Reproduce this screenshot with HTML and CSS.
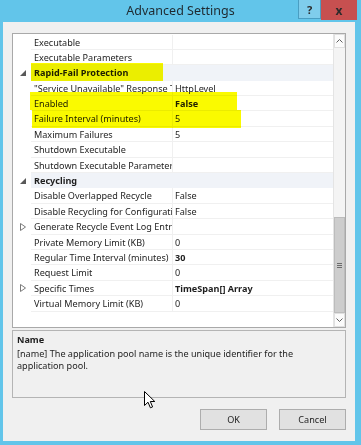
FILE: index.html
```html
<!DOCTYPE html>
<html lang="en">
<head>
  <meta charset="UTF-8">
  <title>Advanced Settings</title>
  <link rel="stylesheet" href="styles.css">
</head>
<body>
  <div class="window">
    <div class="titlebar">
      <span></span>
      <span class="title">Advanced Settings</span>
      <div class="caption-btns">
        <span class="cb help">?</span>
        <span class="cb close">x</span>
      </div>
    </div>

    <div class="client">
      <div class="grid">
        <div class="rows">
          <div class="row"><span class="gutter"></span><span class="name">Executable</span><span class="value"></span></div>
          <div class="row"><span class="gutter"></span><span class="name">Executable Parameters</span><span class="value"></span></div>
          <div class="row cat"><span class="gutter"><svg width="6" height="6" viewBox="0 0 6 6"><path d="M6 0V6H0z" fill="#595959"/></svg></span><span class="name">Rapid-Fail Protection</span></div>
          <div class="row"><span class="gutter"></span><span class="name">"Service Unavailable" Response Type</span><span class="value">HttpLevel</span></div>
          <div class="row"><span class="gutter"></span><span class="name">Enabled</span><span class="value bold">False</span></div>
          <div class="row"><span class="gutter"></span><span class="name">Failure Interval (minutes)</span><span class="value">5</span></div>
          <div class="row"><span class="gutter"></span><span class="name">Maximum Failures</span><span class="value">5</span></div>
          <div class="row"><span class="gutter"></span><span class="name">Shutdown Executable</span><span class="value"></span></div>
          <div class="row"><span class="gutter"></span><span class="name">Shutdown Executable Parameters</span><span class="value"></span></div>
          <div class="row cat"><span class="gutter"><svg width="6" height="6" viewBox="0 0 6 6"><path d="M6 0V6H0z" fill="#595959"/></svg></span><span class="name">Recycling</span></div>
          <div class="row"><span class="gutter"></span><span class="name">Disable Overlapped Recycle</span><span class="value">False</span></div>
          <div class="row"><span class="gutter"></span><span class="name">Disable Recycling for Configuration Changes</span><span class="value">False</span></div>
          <div class="row"><span class="gutter"><svg width="6" height="8" viewBox="0 0 6 8"><path d="M0.5 0.5L5.5 4L0.5 7.5z" fill="none" stroke="#7a7a7a"/></svg></span><span class="name">Generate Recycle Event Log Entry</span><span class="value"></span></div>
          <div class="row"><span class="gutter"></span><span class="name">Private Memory Limit (KB)</span><span class="value">0</span></div>
          <div class="row"><span class="gutter"></span><span class="name">Regular Time Interval (minutes)</span><span class="value bold">30</span></div>
          <div class="row"><span class="gutter"></span><span class="name">Request Limit</span><span class="value">0</span></div>
          <div class="row"><span class="gutter"><svg width="6" height="8" viewBox="0 0 6 8"><path d="M0.5 0.5L5.5 4L0.5 7.5z" fill="none" stroke="#7a7a7a"/></svg></span><span class="name">Specific Times</span><span class="value bold">TimeSpan[] Array</span></div>
          <div class="row"><span class="gutter"></span><span class="name">Virtual Memory Limit (KB)</span><span class="value">0</span></div>
        </div>
        <div class="scrollbar">
          <span class="sb-btn"><svg width="7" height="4" viewBox="0 0 7 4"><path d="M0.5 3.5L3.5 0.5L6.5 3.5" fill="none" stroke="#606060"/></svg></span>
          <div class="sb-track">
            <div class="sb-thumb"><span class="grip"></span></div>
          </div>
          <span class="sb-btn"><svg width="7" height="4" viewBox="0 0 7 4"><path d="M0.5 0.5L3.5 3.5L6.5 0.5" fill="none" stroke="#606060"/></svg></span>
        </div>
      </div>

      <div class="desc">
        <div class="desc-title">Name</div>
        <div class="desc-text">[name] The application pool name is the unique identifier for the application pool.</div>
      </div>

      <div class="buttons">
        <button class="btn">OK</button>
        <button class="btn">Cancel</button>
      </div>
    </div>

    <!-- marker highlights drawn over the grid -->
    <span class="hl hl-cat"></span>
    <span class="hl hl-enabled"></span>
    <span class="hl hl-interval"></span>

    <svg class="cursor" width="12" height="18" viewBox="0 0 12 18">
      <path d="M0.5 0.5V14.5L4 11.2L6.4 16.8L8.6 15.9L6.3 10.5H10.8z" fill="#fff" stroke="#000" stroke-linejoin="round"/>
    </svg>
  </div>
</body>
</html>
```

FILE: styles.css
```css
body {
  margin: 0;
  background: #62c5ea;
  font-family: "Noto Sans", "Open Sans", sans-serif;
  color: #1e1e1e;
}

.window {
  position: relative;
  width: 361px;
  height: 445px;
  overflow: hidden;
}

.titlebar {
  display: grid;
  grid-template-columns: 1fr auto 1fr;
  align-items: start;
  height: 22px;
}

.title {
  font-size: 12.5px;
  line-height: 22px;
  color: #1f2a30;
}

.caption-btns {
  display: flex;
  justify-content: flex-end;
  margin-right: 4px;
}

.cb {
  display: flex;
  align-items: center;
  justify-content: center;
  height: 19px;
  font-size: 11px;
  font-weight: bold;
  color: #2b2b2b;
}

.help {
  width: 21px;
  border: 1px solid #4a9ec2;
  border-top: none;
  background: #7fcdec;
  height: 18px;
}

.close {
  width: 36px;
  background: #c75050;
  height: 20px;
  font-size: 12px;
}

.client {
  margin-left: 3px;
  width: 352px;
  height: 419px;
  background: #f0f0f0;
  padding: 11px 0 0 9px;
  box-sizing: border-box;
}

.grid {
  display: flex;
  width: 334px;
  height: 295px;
  border: 1px solid #a9a9a9;
  box-sizing: border-box;
  background: #fff;
}

.rows {
  flex: 1;
  min-width: 0;
  padding-top: 0.5px;
}

.row {
  display: flex;
  height: 15.4px;
  font-size: 9.1px;
  line-height: 15.4px;
  color: #1e1e1e;
}

.gutter {
  flex: 0 0 18px;
  display: flex;
  align-items: center;
  justify-content: center;
  padding-left: 2px;
  box-sizing: border-box;
}

.name {
  flex: 0 0 142px;
  padding-left: 3px;
  box-sizing: border-box;
  white-space: nowrap;
  overflow: hidden;
  border-right: 1px solid #f0f0f0;
  border-bottom: 1px solid #f0f0f0;
}

.value {
  flex: 1;
  padding-left: 2px;
  white-space: nowrap;
  overflow: hidden;
  border-bottom: 1px solid #f0f0f0;
}

.bold {
  font-weight: bold;
}

.row.cat .name {
  flex: 1;
  font-weight: bold;
  background: #f0f3f8;
  border-right: none;
  border-bottom: none;
}

.scrollbar {
  display: flex;
  flex-direction: column;
  width: 11px;
  background: #f4f4f4;
  border-left: 1px solid #e4e4e4;
}

.sb-btn {
  display: flex;
  align-items: center;
  justify-content: center;
  height: 14px;
  background: #fbfbfb;
  border: 1px solid #e0e0e0;
  box-sizing: border-box;
}

.sb-track {
  flex: 1;
  display: flex;
  flex-direction: column;
  justify-content: flex-end;
}

.sb-thumb {
  height: 96px;
  background: #cdcdcd;
  border: 1px solid #bcbcbc;
  box-sizing: border-box;
  display: flex;
  align-items: center;
  justify-content: center;
}

.grip {
  width: 5px;
  height: 5px;
  border-top: 1px solid #6b6b6b;
  border-bottom: 1px solid #6b6b6b;
  box-sizing: border-box;
  background: linear-gradient(#6b6b6b, #6b6b6b) center / 5px 1px no-repeat;
}

.desc {
  width: 334px;
  height: 68px;
  margin-top: 2px;
  border: 1px solid #b4b4b4;
  box-sizing: border-box;
  padding: 3px 4px;
  font-size: 9.1px;
  line-height: 12px;
}

.desc-title {
  font-weight: bold;
  margin-bottom: 2px;
}

.desc-text {
  width: 290px;
}

.buttons {
  display: flex;
  justify-content: flex-end;
  gap: 12px;
  width: 334px;
  margin-top: 11px;
}

.btn {
  width: 67px;
  height: 21px;
  font-family: inherit;
  font-size: 9.1px;
  color: #1e1e1e;
  background: #e1e1e1;
  border: 1px solid #adadad;
  padding: 0;
}

.hl {
  position: absolute;
  background: #fafa00;
  mix-blend-mode: multiply;
}

.hl-cat {
  left: 31px;
  top: 63px;
  width: 132px;
  height: 18px;
}

.hl-enabled {
  left: 30px;
  top: 92px;
  width: 207px;
  height: 18px;
}

.hl-interval {
  left: 32px;
  top: 110px;
  width: 209px;
  height: 18px;
}

.cursor {
  position: absolute;
  left: 144px;
  top: 391px;
}
```
